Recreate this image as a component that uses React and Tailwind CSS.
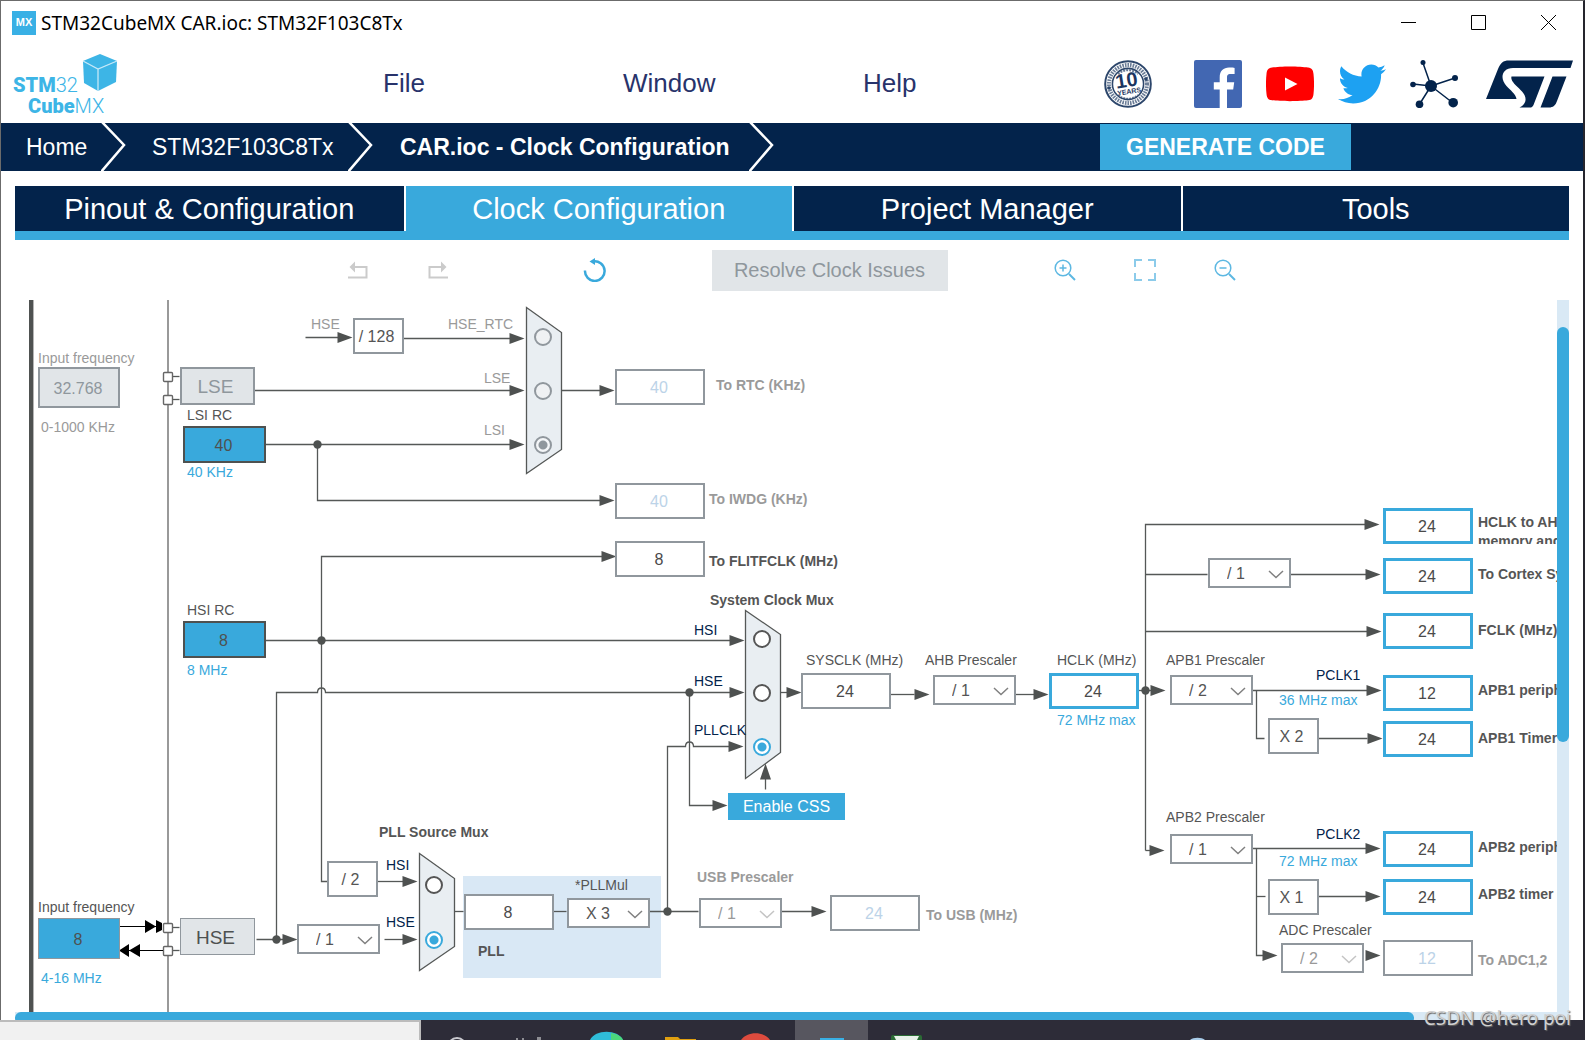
import { useState } from 'react';
import { FaTwitter } from 'react-icons/fa';

const MUXES = [
  { id: 'rtc', points: '512,8 547,33 547,150 512,174' },
  { id: 'sys', points: '731,311 766,335 766,453 731,479' },
  { id: 'pll', points: '405,554 440,579 440,647 405,671' },
];

const WIRES = [
  // RTC / IWDG
  'M291 38H330', 'M389 39H500', 'M240 91H500', 'M251 145H500', 'M547 91H590',
  'M303 145V201H590',
  // HSI
  'M251 341H720', 'M307 341V257H590', 'M307 341V582H313',
  // HSE
  'M242 640H275', 'M262 640V393H303C303 387 311 387 311 393H720', 'M675 393V506H700',
  'M363 582H393', 'M370 640H393', 'M440 612H449', 'M539 612H552',
  // PLLCLK
  'M635 612H684', 'M653 612V447H671C671 441 679 441 679 447H720', 'M767 612H800',
  'M751 490V475', 'M766 393H775',
  // SYSCLK to HCLK
  'M876 395H900', 'M1001 395H1020', 'M1124 391H1140',
  // bus clocks
  'M1131 551V225H1353', 'M1131 275H1193', 'M1275 275H1353', 'M1131 332H1353',
  'M1238 391H1353', 'M1242 391V439H1250', 'M1304 439H1353',
  'M1131 551H1140', 'M1238 549H1353', 'M1242 549V656H1253', 'M1242 597H1251',
  'M1304 597H1353',
  // crystal pins
  'M157 77H165', 'M157 100H165', 'M157 628H165', 'M157 651H165',
];

const ARROWS = [
  [338, 38], [510, 39], [510, 91], [510, 145], [600, 91], [600, 201], [602, 257],
  [730, 341], [730, 393], [713, 506], [403, 582], [403, 640], [283, 640], [729, 447],
  [812, 612], [787, 393], [915, 395], [1034, 395], [1151, 391], [1365, 225],
  [1366, 275], [1367, 332], [1367, 391], [1368, 439], [1150, 551], [1366, 549],
  [1366, 597], [1263, 656], [1366, 656],
];

const DOTS = [[303, 145], [307, 341], [262, 640], [675, 393], [653, 612], [1131, 391]];

const PINS = [[148, 72], [148, 95], [148, 623], [148, 646]];

const TONES = {
  dark: 'text-[#555555]',
  muted: 'text-[#9a9a9a]',
  blue: 'text-[#39a9dc]',
  navy: 'text-[#03234b]',
};

const LABELS = [
  { text: 'Input frequency', x: 23, y: 50, tone: 'muted', htmlFor: 'lse-in' },
  { text: '0-1000 KHz', x: 26, y: 119, tone: 'muted' },
  { text: 'LSI RC', x: 172, y: 107, tone: 'dark', htmlFor: 'lsi' },
  { text: '40 KHz', x: 172, y: 164, tone: 'blue' },
  { text: 'HSE', x: 296, y: 16, tone: 'muted' },
  { text: 'HSE_RTC', x: 433, y: 16, tone: 'muted', htmlFor: 'rtc-hse' },
  { text: 'LSE', x: 469, y: 70, tone: 'muted', htmlFor: 'rtc-lse' },
  { text: 'LSI', x: 469, y: 122, tone: 'muted', htmlFor: 'rtc-lsi' },
  { text: 'To RTC (KHz)', x: 701, y: 77, tone: 'muted', bold: true, htmlFor: 'rtc' },
  { text: 'To IWDG (KHz)', x: 694, y: 191, tone: 'muted', bold: true, htmlFor: 'iwdg' },
  { text: 'To FLITFCLK (MHz)', x: 694, y: 253, tone: 'dark', bold: true, htmlFor: 'flitf' },
  { text: 'HSI RC', x: 172, y: 302, tone: 'dark', htmlFor: 'hsi' },
  { text: '8 MHz', x: 172, y: 362, tone: 'blue' },
  { text: 'System Clock Mux', x: 695, y: 292, tone: 'dark', bold: true },
  { text: 'HSI', x: 679, y: 322, tone: 'navy', htmlFor: 'sys-hsi' },
  { text: 'HSE', x: 679, y: 373, tone: 'navy', htmlFor: 'sys-hse' },
  { text: 'PLLCLK', x: 679, y: 422, tone: 'navy', htmlFor: 'sys-pll' },
  { text: 'SYSCLK (MHz)', x: 791, y: 352, tone: 'dark', htmlFor: 'sysclk' },
  { text: 'AHB Prescaler', x: 910, y: 352, tone: 'dark', htmlFor: 'ahb' },
  { text: 'HCLK (MHz)', x: 1042, y: 352, tone: 'dark', htmlFor: 'hclk' },
  { text: '72 MHz max', x: 1042, y: 412, tone: 'blue' },
  { text: 'APB1 Prescaler', x: 1151, y: 352, tone: 'dark', htmlFor: 'apb1' },
  { text: 'PCLK1', x: 1301, y: 367, tone: 'navy' },
  { text: '36 MHz max', x: 1264, y: 392, tone: 'blue' },
  { text: 'APB2 Prescaler', x: 1151, y: 509, tone: 'dark', htmlFor: 'apb2' },
  { text: 'PCLK2', x: 1301, y: 526, tone: 'navy' },
  { text: '72 MHz max', x: 1264, y: 553, tone: 'blue' },
  { text: 'ADC Prescaler', x: 1264, y: 622, tone: 'dark', htmlFor: 'adc-pre' },
  { text: 'To Cortex System timer (MHz)', x: 1463, y: 266, tone: 'dark', bold: true, htmlFor: 'cortex' },
  { text: 'FCLK (MHz)', x: 1463, y: 322, tone: 'dark', bold: true, htmlFor: 'fclk' },
  { text: 'APB1 peripheral clocks (MHz)', x: 1463, y: 382, tone: 'dark', bold: true, htmlFor: 'apb1-per' },
  { text: 'APB1 Timer clocks (MHz)', x: 1463, y: 430, tone: 'dark', bold: true, htmlFor: 'apb1-tim' },
  { text: 'APB2 peripheral clocks (MHz)', x: 1463, y: 539, tone: 'dark', bold: true, htmlFor: 'apb2-per' },
  { text: 'APB2 timer clocks (MHz)', x: 1463, y: 586, tone: 'dark', bold: true, htmlFor: 'apb2-tim' },
  { text: 'To ADC1,2', x: 1463, y: 652, tone: 'muted', bold: true, htmlFor: 'adc' },
  { text: 'PLL Source Mux', x: 364, y: 524, tone: 'dark', bold: true },
  { text: 'HSI', x: 371, y: 557, tone: 'navy', htmlFor: 'pll-hsi' },
  { text: 'HSE', x: 371, y: 614, tone: 'navy', htmlFor: 'pll-hse' },
  { text: '*PLLMul', x: 560, y: 577, tone: 'dark', htmlFor: 'pllmul' },
  { text: 'PLL', x: 463, y: 643, tone: 'dark', bold: true, htmlFor: 'pll-in' },
  { text: 'USB Prescaler', x: 682, y: 569, tone: 'muted', bold: true, htmlFor: 'usb-pre' },
  { text: 'To USB (MHz)', x: 911, y: 607, tone: 'muted', bold: true, htmlFor: 'usb' },
  { text: 'Input frequency', x: 23, y: 599, tone: 'dark', htmlFor: 'hse-in' },
  { text: '4-16 MHz', x: 26, y: 670, tone: 'blue' },
];

const FIELD_STYLES = {
  plain: 'w-[90px] h-[36px] border-2 border-[#90979d] bg-white text-[#4a4a4a]',
  off: 'w-[90px] h-[36px] border-2 border-[#90979d] bg-white text-[#bcd3e8]',
  limit: 'w-[90px] h-[36px] border-3 border-[#39a9dc] bg-white text-[#4a4a4a]',
  source: 'w-[83px] h-[37px] border-2 border-[#4e5150] bg-[#39a9dc] text-[#4e5150]',
  input: 'w-[82px] h-[41px] border border-[#90979d] bg-[#39a9dc] text-[#4e5150]',
  inputOff: 'w-[82px] h-[41px] border-2 border-[#90979d] bg-[#e1e5e8] text-[#8f979d]',
};

const FIELDS = [
  { id: 'lse-in', value: '32.768', x: 23, y: 67, kind: 'inputOff' },
  { id: 'lsi', value: '40', x: 168, y: 126, kind: 'source' },
  { id: 'hsi', value: '8', x: 168, y: 321, kind: 'source' },
  { id: 'hse-in', value: '8', x: 23, y: 618, kind: 'input' },
  { id: 'rtc', value: '40', x: 600, y: 69, kind: 'off' },
  { id: 'iwdg', value: '40', x: 600, y: 183, kind: 'off' },
  { id: 'flitf', value: '8', x: 600, y: 241, kind: 'plain' },
  { id: 'sysclk', value: '24', x: 786, y: 373, kind: 'plain' },
  { id: 'hclk', value: '24', x: 1034, y: 373, kind: 'limit' },
  { id: 'pll-in', value: '8', x: 449, y: 594, kind: 'plain' },
  { id: 'usb', value: '24', x: 815, y: 595, kind: 'off' },
  { id: 'ahb-bus', value: '24', x: 1368, y: 208, kind: 'limit' },
  { id: 'cortex', value: '24', x: 1368, y: 258, kind: 'limit' },
  { id: 'fclk', value: '24', x: 1368, y: 313, kind: 'limit' },
  { id: 'apb1-per', value: '12', x: 1368, y: 375, kind: 'limit' },
  { id: 'apb1-tim', value: '24', x: 1368, y: 421, kind: 'limit' },
  { id: 'apb2-per', value: '24', x: 1368, y: 531, kind: 'limit' },
  { id: 'apb2-tim', value: '24', x: 1368, y: 579, kind: 'limit' },
  { id: 'adc', value: '12', x: 1368, y: 640, kind: 'off' },
];

const FACTORS = [
  { text: '/ 128', x: 338, y: 18 },
  { text: '/ 2', x: 312, y: 561 },
  { text: 'X 2', x: 1253, y: 418 },
  { text: 'X 1', x: 1253, y: 579 },
];

const DIVIDERS = [
  { id: 'ahb', value: '/ 1', x: 918, y: 375 },
  { id: 'cortex-pre', value: '/ 1', x: 1193, y: 258, name: 'Cortex prescaler' },
  { id: 'apb1', value: '/ 2', x: 1155, y: 375 },
  { id: 'apb2', value: '/ 1', x: 1155, y: 534 },
  { id: 'adc-pre', value: '/ 2', x: 1266, y: 643, disabled: true },
  { id: 'hse-pre', value: '/ 1', x: 282, y: 624, name: 'HSE prescaler' },
  { id: 'pllmul', value: 'X 3', x: 552, y: 598 },
  { id: 'usb-pre', value: '/ 1', x: 684, y: 598, disabled: true },
];

const RADIOS = [
  { id: 'rtc-hse', group: 'rtc', x: 519, y: 28, disabled: true },
  { id: 'rtc-lse', group: 'rtc', x: 519, y: 82, disabled: true },
  { id: 'rtc-lsi', group: 'rtc', x: 519, y: 136, disabled: true },
  { id: 'sys-hsi', group: 'sys', x: 738, y: 330 },
  { id: 'sys-hse', group: 'sys', x: 738, y: 384 },
  { id: 'sys-pll', group: 'sys', x: 738, y: 438 },
  { id: 'pll-hsi', group: 'pll', x: 410, y: 576 },
  { id: 'pll-hse', group: 'pll', x: 410, y: 631 },
];

function CubeLogo() {
  return (
    <svg width="106" height="64" viewBox="0 0 106 64" role="img" aria-label="STM32 CubeMX">
      <path d="M70 9L87 2L104 9L85 17Z" fill="#3db5e6" />
      <path d="M70 9L85 17V39L71 31Z" fill="#3db5e6" />
      <path d="M104 9L85 17V39L103 30Z" fill="#3db5e6" />
      <path d="M70 9L85 17L104 9M85 17V39" fill="none" stroke="#c4e8f8" strokeWidth="1.3" />
      <g fill="#3db5e6" fontSize="20" fontFamily="Roboto, sans-serif">
        <text x="0" y="40"><tspan fontWeight="900">STM</tspan><tspan fontWeight="300">32</tspan></text>
        <text x="15" y="61"><tspan fontWeight="900">Cube</tspan><tspan fontWeight="300">MX</tspan></text>
      </g>
    </svg>
  );
}

function AnniversaryIcon() {
  return (
    <svg width="48" height="48" viewBox="0 0 48 48" fill="none" stroke="#2c466b">
      <circle cx="24" cy="24" r="22.8" strokeWidth="2" />
      <circle cx="24" cy="24" r="19" strokeWidth="4" strokeDasharray="1.6 1" opacity="0.7" />
      <circle cx="24" cy="24" r="15.600" strokeWidth="1.6" />
      <path d="M14 14C20 9 28 9 34 14" strokeWidth="2" strokeDasharray="2 1" opacity="0.7" />
      <path d="M14 35C20 40 28 40 34 35" strokeWidth="2" strokeDasharray="2 1" opacity="0.7" />
      <circle cx="5" cy="28" r="1.8" fill="#2c466b" stroke="none" />
      <circle cx="42" cy="19" r="1.8" fill="#2c466b" stroke="none" />
      <g fill="#1b3560" stroke="none" textAnchor="middle" fontWeight="700" transform="rotate(-9 24 24)" fontFamily='"Liberation Sans", sans-serif'>
        <text x="23" y="27" fontSize="20">10</text>
        <text x="24" y="34" fontSize="7">YEARS</text>
      </g>
    </svg>
  );
}

function FacebookIcon() {
  return (
    <svg width="48" height="48" viewBox="0 0 48 48">
      <rect width="48" height="48" rx="2" fill="#4267b2" />
      <path fill="#fff" d="M33 48V29.4h6.2l1-7.2H33v-4.6c0-2.1.6-3.5 3.6-3.5h4V7.9c-.7-.1-2.9-.3-5.6-.3-5.5 0-9.3 3.4-9.3 9.6v5h-5.9v7.2h5.9V48z" />
    </svg>
  );
}

function YoutubeIcon() {
  return (
    <svg width="48" height="48" viewBox="0 0 48 48">
      <path fill="#f00" d="M6 7.5C14 6 34 6 42 7.5C46 8 47 10 47.500 14C48.200 20 48.200 28 47.500 34C47 38 46 39.800 42 40.300C34 41.400 14 41.400 6 40.300C2 39.800 1 38 .5 34C-.2 28-.2 20 .5 14C1 10 2 8 6 7.500Z" />
      <path fill="#fff" d="M19 17.500V30.500L31.500 24Z" />
    </svg>
  );
}

function NetworkIcon() {
  return (
    <svg width="48" height="48" viewBox="0 0 48 48" fill="#03234b" stroke="#03234b">
      <path fill="none" strokeWidth="1.5" d="M21 26L13 3M21 26L45 18M21 26L3 24M21 26L9 45M21 26L43 43" />
      <g stroke="none">
        <circle cx="21" cy="26" r="6" />
        <circle cx="13" cy="2.500" r="2.500" />
        <circle cx="45" cy="18" r="3" />
        <circle cx="3" cy="24.500" r="2.800" />
        <circle cx="9.500" cy="44.300" r="3.800" />
        <circle cx="43.200" cy="42.700" r="4.800" />
      </g>
    </svg>
  );
}

function StLogo() {
  return (
    <svg width="87" height="48" viewBox="0 0 87 48" fill="#03234b" role="img" aria-label="ST">
      <path d="M0 39L12 9C14.500 3 17 .5 23 .5H87L84.500 8H27C20 8 16.500 12 16.500 17C16.500 20 18 23 20.500 26C24 30 30 34 30.500 39Z" />
      <path d="M25.500 16.500H58.500L47.500 45C46.500 47 45.500 47.500 44 47.500H33.500C39 45 41 40 38.500 35C36 30 30 26.500 27 22C25.500 20 25 18 25.500 16.500Z" />
      <path d="M66.500 16.500H80.500L71 41C69.500 45.500 67 47.500 63 47.500H54.500Z" />
    </svg>
  );
}

function TitleBar() {
  return (
    <div className="flex h-[44px] shrink-0 items-center pb-px pl-[11px] pr-3">
      <span className="flex h-6 w-6 items-center justify-center bg-[#39b0e5] text-[11px] font-bold text-white">MX</span>
      <h1 className="ml-[5px] font-['Noto_Sans',sans-serif] text-[19px] leading-6 text-black">
        STM32CubeMX CAR.ioc: STM32F103C8Tx
      </h1>
      <div className="ml-auto flex">
        <button aria-label="Minimize" className="flex h-8 w-[70px] items-center justify-center">
          <svg width="15" height="15" stroke="#000"><path d="M0 7.500H15" /></svg>
        </button>
        <button aria-label="Maximize" className="flex h-8 w-[70px] items-center justify-center">
          <svg width="15" height="15" stroke="#000" fill="none"><path d="M.5 .5H14.500V14.500H.5Z" /></svg>
        </button>
        <button aria-label="Close" className="-mr-3 flex h-8 w-[70px] items-center justify-center">
          <svg width="15" height="15" stroke="#000"><path d="M0 0L15 15M15 0L0 15" /></svg>
        </button>
      </div>
    </div>
  );
}

function Header() {
  return (
    <header className="flex h-[78px] shrink-0 items-center pl-3 pr-[10px]">
      <CubeLogo />
      <nav className="ml-[264px] flex pb-0.5 text-[26px] leading-8 text-[#28336b]">
        <button className="w-60 text-left">File</button>
        <button className="w-60 text-left">Window</button>
        <button className="w-60 text-left">Help</button>
      </nav>
      <div className="ml-auto flex items-center gap-6">
        <a href="#anniversary" aria-label="10 years" className="mr-[18px]"><AnniversaryIcon /></a>
        <a href="#facebook" aria-label="Facebook"><FacebookIcon /></a>
        <a href="#youtube" aria-label="YouTube"><YoutubeIcon /></a>
        <a href="#twitter" aria-label="Twitter"><FaTwitter size={48} color="#1da1f2" /></a>
        <a href="#community" aria-label="Community"><NetworkIcon /></a>
        <a href="#st" aria-label="ST home" className="ml-1"><StLogo /></a>
      </div>
    </header>
  );
}

function Chevron() {
  return (
    <svg width="25" height="48" viewBox="0 0 25 48" fill="none" stroke="#fff" strokeWidth="2.500">
      <path d="M1 -1L23 22L0 49" />
    </svg>
  );
}

function Breadcrumbs() {
  return (
    <div className="flex h-12 shrink-0 items-center bg-[#03234b] pl-[25px] pr-[232px] text-[23px] leading-8 text-white">
      <a href="#home" className="w-[75px]">Home</a>
      <Chevron />
      <a href="#mcu" className="ml-[26px] w-[196px]">STM32F103C8Tx</a>
      <Chevron />
      <a href="#clock" className="ml-[27px] w-[349px] whitespace-nowrap font-bold">CAR.ioc - Clock Configuration</a>
      <Chevron />
      <button className="ml-auto h-[46px] w-[251px] bg-[#39a9dc] font-bold">GENERATE CODE</button>
    </div>
  );
}

function Tabs() {
  const tabs = ['Pinout & Configuration', 'Clock Configuration', 'Project Manager', 'Tools'];
  const [active, setActive] = useState(tabs[1]);

  return (
    <div className="mt-[15px] grid shrink-0 grid-cols-4 border-b-[9px] border-[#39a9dc] bg-white" role="tablist">
      {tabs.map(tab => (
        <button
          key={tab}
          role="tab"
          aria-selected={tab === active}
          onClick={() => setActive(tab)}
          className={`h-[45px] border-l-2 border-white text-[29px] leading-8 text-white first:border-l-0 ${
            tab === active ? 'bg-[#39a9dc]' : 'bg-[#03234b]'
          }`}
        >
          {tab}
        </button>
      ))}
    </div>
  );
}

function ToolButton({ label, children }) {
  return (
    <button aria-label={label} className="flex h-10 w-20 items-center justify-center">
      {children}
    </button>
  );
}

function Toolbar() {
  return (
    <div className="flex h-[60px] shrink-0 items-center justify-center gap-[77px] pr-0.5">
      <div className="flex">
        <ToolButton label="Undo">
          <svg width="20" height="18" fill="none" stroke="#cbcbcb" strokeWidth="2">
            <path d="M6 6H18.500V16.500H0" />
            <path d="M1.500 6L7 .5V11.500Z" fill="#cbcbcb" stroke="none" />
          </svg>
        </ToolButton>
        <ToolButton label="Redo">
          <svg width="20" height="18" fill="none" stroke="#cbcbcb" strokeWidth="2">
            <path d="M14 6H1.500V16.500H20" />
            <path d="M18.500 6L13 .5V11.500Z" fill="#cbcbcb" stroke="none" />
          </svg>
        </ToolButton>
      </div>
      <ToolButton label="Reset clocks">
        <svg width="24" height="24" viewBox="0 0 24 24" fill="none" stroke="#39a9dc" strokeWidth="2.500">
          <path d="M2 12.500A9.800 9.800 0 1 0 10 3.500" />
          <path d="M6.500 3.500L12 0V7Z" fill="#39a9dc" stroke="none" />
        </svg>
      </ToolButton>
      <button disabled className="h-[41px] w-[236px] bg-[#e1e5e8] text-[20px] leading-6 text-[#8f979d]">
        Resolve Clock Issues
      </button>
      <div className="flex">
        <ToolButton label="Zoom in">
          <svg width="22" height="22" viewBox="0 0 22 22" fill="none" stroke="#5db8e2" strokeWidth="1.500">
            <circle cx="9" cy="9" r="7.800" />
            <path d="M9 5.500V12.500M5.500 9H12.500" />
            <path d="M15 15L21 21" strokeWidth="2" />
          </svg>
        </ToolButton>
        <ToolButton label="Fit to window">
          <svg width="22" height="22" viewBox="0 0 22 22" fill="none" stroke="#8ccbea" strokeWidth="2">
            <path d="M1 8V1H8M14 1H21V8M21 14V21H14M8 21H1V14" />
          </svg>
        </ToolButton>
        <ToolButton label="Zoom out">
          <svg width="22" height="22" viewBox="0 0 22 22" fill="none" stroke="#5db8e2" strokeWidth="1.500">
            <circle cx="9" cy="9" r="7.800" />
            <path d="M5.500 9H12.500" />
            <path d="M15 15L21 21" strokeWidth="2" />
          </svg>
        </ToolButton>
      </div>
    </div>
  );
}

function Divider({ divider }) {
  const color = divider.disabled ? 'text-[#999999]' : 'text-[#555555]';

  return (
    <div className="absolute" style={{ left: divider.x, top: divider.y }}>
      <select
        id={divider.id}
        aria-label={divider.name}
        disabled={divider.disabled}
        defaultValue={divider.value}
        className={`block h-[30px] w-[83px] appearance-none border-2 border-[#90979d] bg-white pl-[17px] pt-px text-[16px] leading-5 disabled:opacity-100 ${color}`}
      >
        <option>{divider.value}</option>
      </select>
      <svg
        width="16"
        height="9"
        fill="none"
        strokeWidth="1.500"
        className="pointer-events-none absolute right-[7px] top-[12px]"
        stroke={divider.disabled ? '#c4c4c4' : '#808080'}
      >
        <path d="M1 1L8 7.500L15 1" />
      </svg>
    </div>
  );
}

function ClockTree() {
  const [selected, setSelected] = useState({ rtc: 'rtc-lsi', sys: 'sys-pll', pll: 'pll-hse' });

  return (
    <div className="relative h-full min-h-[680px] w-[1700px]">
      <div className="absolute inset-y-0 left-[14px] w-[5px] border-r border-[#b5b5b5] bg-[#4f5251]" />
      <div className="absolute inset-y-0 left-[152px] w-[2px] bg-[#999999]" />
      <div className="absolute left-[448px] top-[576px] h-[102px] w-[198px] bg-[#d9e8f5]" />

      <svg width="1700" height="700" className="absolute left-0 top-0">
        <g transform="translate(-.5 -.5)" fill="none" stroke="#555857" strokeWidth="1.300">
          {MUXES.map(mux => <polygon key={mux.id} points={mux.points} fill="#e9eef2" />)}
          {WIRES.map(d => <path key={d} d={d} />)}
        </g>
        <g fill="#4e5150" transform="translate(-.5 -.5)">
          {ARROWS.map(([x, y]) => <path key={`${x}-${y}`} d={`M${x} ${y}l-15 -5.500v11z`} />)}
          {DOTS.map(([x, y]) => <circle key={`${x}-${y}`} cx={x} cy={y} r="4.200" />)}
          <path d="M751 464L745.500 480H756.500Z" />
        </g>
        {PINS.map(([x, y]) => (
          <rect key={y} x={x + 0.5} y={y + 0.5} width="9" height="9" rx="1" fill="#fff" stroke="#666" strokeWidth="1.400" />
        ))}
        <g stroke="#000">
          <path d="M105 626.500H147M105 650.500H148" />
          <path stroke="none" d="M130 620l11 6.500l-11 6.500zM141 620v13l6 -3v-7zM125 644l-11 6.500l11 6.500zM114 644l-10 6.500l10 6.500z" />
        </g>
      </svg>

      {LABELS.map(label => (
        <label
          key={`${label.x}-${label.y}`}
          htmlFor={label.htmlFor}
          style={{ left: label.x, top: label.y }}
          className={`absolute whitespace-nowrap text-[14px] leading-4 ${TONES[label.tone]} ${label.bold ? 'font-bold' : ''}`}
        >
          {label.text}
        </label>
      ))}
      <label
        htmlFor="ahb-bus"
        className="absolute left-[1463px] top-[213px] h-[31px] w-[170px] overflow-hidden text-[14px] font-bold leading-[19px] text-[#555555]"
      >
        HCLK to AHB bus, core, memory and DMA (MHz)
      </label>

      {FIELDS.map(field => (
        <input
          key={field.id}
          id={field.id}
          defaultValue={field.value}
          style={{ left: field.x, top: field.y }}
          className={`absolute pr-0.5 pt-0.5 text-center text-[16px] leading-5 ${FIELD_STYLES[field.kind]}`}
        />
      ))}

      {FACTORS.map(factor => (
        <div
          key={factor.text + factor.y}
          style={{ left: factor.x, top: factor.y }}
          className="absolute flex h-[36px] w-[51px] items-center justify-center border-2 border-[#90979d] bg-white pr-1 pt-0.5 text-[16px] leading-5 text-[#555555]"
        >
          {factor.text}
        </div>
      ))}

      {DIVIDERS.map(divider => <Divider key={divider.id} divider={divider} />)}

      {RADIOS.map(radio => (
        <input
          key={radio.id}
          id={radio.id}
          type="radio"
          name={radio.group}
          disabled={radio.disabled}
          checked={selected[radio.group] === radio.id}
          onChange={() => setSelected({ ...selected, [radio.group]: radio.id })}
          style={{ left: radio.x, top: radio.y }}
          className={`absolute h-[18px] w-[18px] appearance-none rounded-full border-2 ${
            radio.disabled
              ? 'border-[#90979d] bg-[#eff1f3] checked:bg-[radial-gradient(circle,#90979d_4px,#f4f6f8_5px)]'
              : 'border-[#555555] bg-white checked:border-[#39a9dc] checked:bg-[radial-gradient(circle,#39a9dc_4px,#ffffff_5px)]'
          }`}
        />
      ))}

      <button disabled className="absolute left-[165px] top-[67px] h-[38px] w-[75px] border-2 border-[#90979d] bg-[#e1e5e8] pr-1 pt-0.5 text-[19px] leading-6 text-[#8f979d]">
        LSE
      </button>
      <button className="absolute left-[165px] top-[618px] h-[37px] w-[75px] border border-[#90979d] bg-[#e1e5e8] pr-1 pt-0.5 text-[19px] leading-6 text-[#4e5150]">
        HSE
      </button>
      <button className="absolute left-[713px] top-[493px] h-[27px] w-[117px] bg-[#39a9dc] pt-px text-[16px] leading-5 text-white">
        Enable CSS
      </button>
    </div>
  );
}

function Taskbar() {
  return (
    <footer className="flex h-5 shrink-0 overflow-hidden bg-[#2d2c38]">
      <div className="w-[421px] border-r-2 border-t-2 border-[#bcbcbc] bg-[#f1f1f1]" />
      <svg width="374" height="20">
        <circle cx="36" cy="27" r="9" fill="none" stroke="#c9c9cf" strokeWidth="2" />
        <path d="M96 20V18M102 20V18M117 20V17M119 20V17" stroke="#eee" />
        <path d="M169 20C174 9 197 9 202 20Z" fill="#2fbcd8" />
        <path d="M190 13C196 14 200 16 202 20H190Z" fill="#4cd97b" />
        <path d="M244 17H257L259 19H275V20H244Z" fill="#e0a010" />
        <path d="M320 20C326 11 343 11 349 20Z" fill="#dd4b3e" />
      </svg>
      <div className="flex w-[73px] items-end justify-center bg-[#57565f]">
        <div className="h-0.5 w-6 bg-[#39b0e5]" />
      </div>
      <svg width="400" height="20">
        <rect x="23" y="15" width="31" height="10" rx="2" fill="#2b6b35" />
        <path d="M26 16H51L49 20H28Z" fill="#e9f2ea" />
        <path d="M322 20C325 17 334 17 337 20Z" fill="#a9cdea" />
      </svg>
    </footer>
  );
}

function App() {
  return (
    <div className="relative flex h-screen min-w-[1400px] flex-col overflow-hidden bg-white font-['Liberation_Sans',Arial,sans-serif]">
      <main className="flex min-h-0 flex-1 flex-col border-l border-r-2 border-t border-l-[#6b6b6b] border-r-[#25252d] border-t-[#6b6b6b]">
        <TitleBar />
        <Header />
        <Breadcrumbs />
        <section className="flex min-h-0 flex-1 flex-col px-[14px]">
          <Tabs />
          <Toolbar />
          <div className="flex min-h-0 flex-1">
            <div className="min-w-0 flex-1 overflow-hidden">
              <ClockTree />
            </div>
            <div className="w-3 bg-[#d9e9f5] pt-[27px]">
              <div className="h-[415px] rounded-full bg-[#39a9dc]" />
            </div>
          </div>
          <div className="h-2 shrink-0 overflow-hidden bg-[#d9e9f5]">
            <div className="h-3 w-[90%] rounded-full bg-[#39a9dc]" />
          </div>
        </section>
      </main>
      <Taskbar />
      <p className="absolute bottom-2.5 right-[14px] font-['Noto_Sans',sans-serif] text-[19px] leading-6 text-[#d0d0d0] [text-shadow:1px_1px_1px_#666666]">
        CSDN @hero poi
      </p>
    </div>
  );
}

export default App;
